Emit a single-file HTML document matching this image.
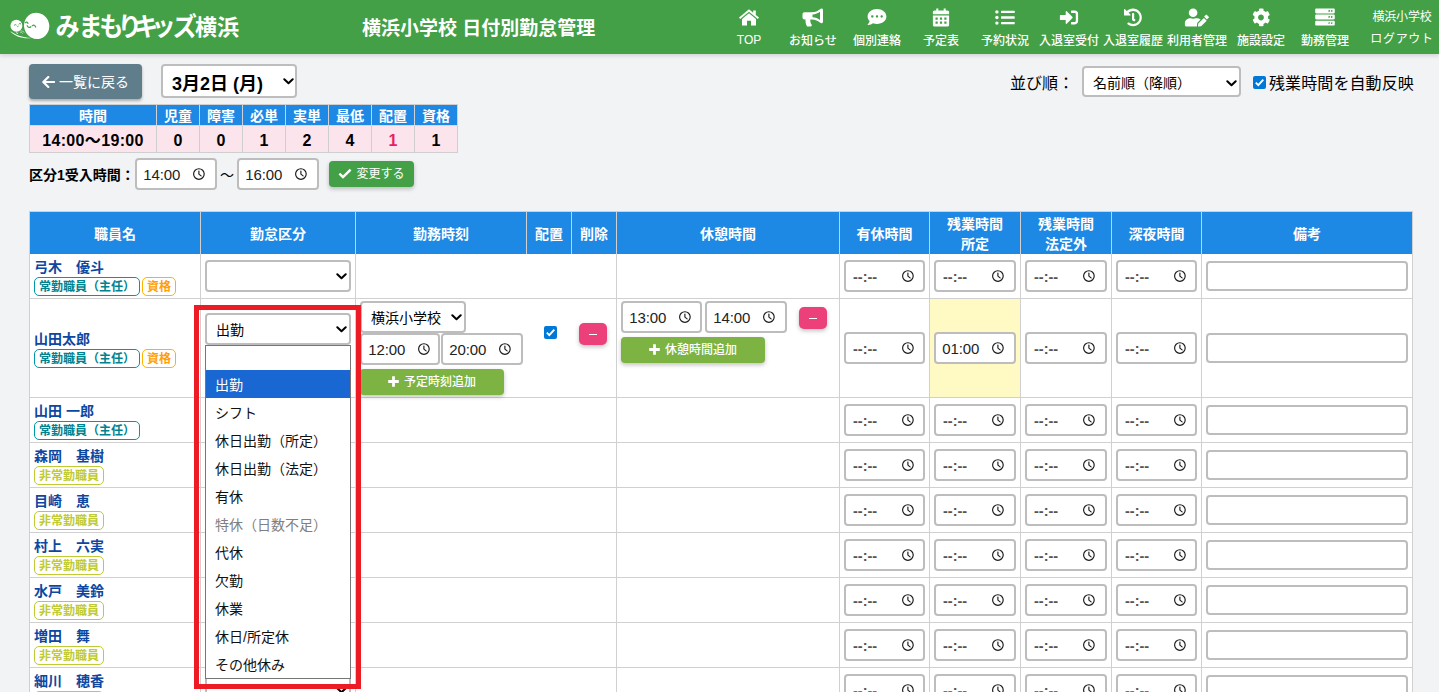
<!DOCTYPE html>
<html lang="ja">
<head>
<meta charset="utf-8">
<title>横浜小学校 日付別勤怠管理</title>
<style>
*{box-sizing:border-box;margin:0;padding:0}
html,body{width:1439px;height:692px;overflow:hidden}
body{background:#f2f3f5;font-family:"Liberation Sans","Noto Sans CJK JP",sans-serif;color:#000;position:relative;font-size:14px}
.abs{position:absolute}
/* ---------- header ---------- */
#hdr{position:absolute;left:0;top:0;width:1439px;height:54px;background:#43a047;box-shadow:0 2px 4px rgba(0,0,0,.13);z-index:5}
#logo-svg text{font-family:"Liberation Sans","Noto Sans CJK JP",sans-serif}
#logo-yh{position:absolute;left:195px;top:9px;color:#fff;font-weight:700;font-size:22px;line-height:38px;white-space:nowrap;letter-spacing:0}
#title{position:absolute;left:362px;top:14px;color:#fff;font-weight:700;font-size:19px;line-height:30px;white-space:nowrap}
.nav{position:absolute;top:0;width:64px;height:54px;color:#fff;text-align:center}
.nav svg{position:absolute;left:50%;top:8px;transform:translateX(-50%);fill:#fff}
.nav span{position:absolute;left:-10px;right:-10px;top:33px;font-size:12px;line-height:16px;letter-spacing:0;font-weight:500;white-space:nowrap}
#user{position:absolute;left:1357px;top:0;width:82px;color:#fff;font-size:12px;text-align:center;letter-spacing:-.2px}
#user div{position:absolute;left:0;right:-8px;line-height:16px;white-space:nowrap}
/* ---------- top controls ---------- */
#back{left:29px;top:64px;width:113px;height:35px;background:#607d8b;border-radius:4px;color:#fff;font-size:14px;line-height:36px;text-align:center;box-shadow:0 2px 3px rgba(0,0,0,.3);white-space:nowrap}
.sel{position:absolute;background:#fff;border:2px solid #bdbdbd;border-radius:4px;white-space:nowrap}
.sel svg{position:absolute}
#datesel{left:161px;top:64px;width:136px;height:34px;font-weight:700;font-size:18px;line-height:37px;padding-left:9px}
#sortlbl{left:1010px;top:70px;font-size:16px;line-height:28px;white-space:nowrap}
#sortsel{left:1082px;top:66px;width:159px;height:31px;font-size:14px;line-height:31px;padding-left:9px}
#chk1{left:1253px;top:76px}
.cb{position:absolute;width:13px;height:13px;background:#0078d7;border-radius:2px}
.cb svg{position:absolute;left:0;top:0}
#chklbl{left:1269px;top:70px;font-size:16px;line-height:28px;white-space:nowrap;letter-spacing:.1px}
/* ---------- summary table ---------- */
#sum{position:absolute;left:29px;top:104px;border-collapse:separate;border-spacing:0;table-layout:fixed;width:429px;border-top:1px solid #cfcfcf;border-left:1px solid #cfcfcf}
#sum th{background:#1e88e5;color:#fff;font-weight:700;font-size:14px;height:21px;line-height:18px;border-right:1px solid #cfd2d6;border-bottom:1px solid #e3d3da;text-align:center;padding:2px 0 0}
#sum td{background:#fce4ec;font-weight:700;font-size:16px;height:27px;line-height:22px;border-right:1px solid #cfcfcf;border-bottom:1px solid #cfcfcf;text-align:center;padding:4px 0 0;letter-spacing:.35px}
#sum td.red{color:#e91e63}
#kubun{left:29px;top:160px;font-weight:700;font-size:14px;line-height:30px;white-space:nowrap}
.time{position:absolute;background:#fff;border:2px solid #bdbdbd;border-radius:4px;font-size:15px;letter-spacing:-.15px;white-space:nowrap;color:#222}
.time span{position:absolute;left:6.3px;top:0}
.time svg{position:absolute}
#chg{left:329px;top:161px;width:85px;height:26px;background:#43a047;border-radius:4px;color:#fff;font-size:12px;line-height:27px;text-align:center;box-shadow:0 2px 4px rgba(0,0,0,.24);white-space:nowrap}
/* ---------- main table ---------- */
#grid{position:absolute;left:29px;top:211px;width:1384px;height:481px;background:#fff}
.th{position:absolute;top:1px;height:42px;background:#1e88e5;color:#fff;font-weight:700;font-size:14px;line-height:44px;text-align:center;white-space:nowrap;overflow:hidden}
.th.two{line-height:20px;padding-top:2px}
.vl{position:absolute;width:1px;background:#d0d0d0}
.hl{position:absolute;left:0;width:1384px;height:1px;background:#d0d0d0}
.yl{position:absolute;background:#fff9c4}
.nm{position:absolute;left:5px;color:#0d47a1;font-weight:700;font-size:14px;line-height:21px;padding-top:1px;white-space:nowrap}
.bd{position:absolute;height:19px;border:1px solid;border-radius:5px;font-weight:700;font-size:12px;line-height:19px;text-align:center;white-space:nowrap;background:#fff}
.b1{color:#00838f;border-color:#0097a7}
.b2{color:#ffa000;border-color:#ffb300}
.b3{color:#c0ca33;border-color:#c0ca33}
.txt{position:absolute;width:202px;height:30px;background:#fff;border:2px solid #bdbdbd;border-radius:4px}
.btn{position:absolute;border-radius:4px;color:#fff;text-align:center;white-space:nowrap;box-shadow:0 2px 4px rgba(0,0,0,.24)}
.pink{background:#ec407a;border-radius:5px}
.lg{background:#7cb342;font-size:12px;font-weight:500}
.s14{font-size:14px;line-height:30px;padding-left:9px}
.s14b{font-size:14px;line-height:30px;padding-left:9px}
.cv{position:absolute;line-height:0}
.time span{line-height:30px}
.time svg{left:55px;top:7px}
.time.em span{font-weight:700;line-height:31px;font-size:14.5px;letter-spacing:0;left:7px;color:#555}
.pink i{position:absolute;left:10px;top:11px;width:8px;height:1px;background:#fff}
/* dropdown */
#dd{left:205px;top:345px;width:146px;height:334px;background:#fff;border:1px solid #767676;z-index:3}
#dd div{height:28px;line-height:30px;overflow:hidden;font-size:14px;padding-left:9px;white-space:nowrap;color:#111}
#dd div.blank{height:24px}
#dd div.on{background:#1967d2;color:#fff}
#dd div.dis{color:#808080}
#red{left:194px;top:305px;width:167px;height:384px;border:5px solid #ed1c24;z-index:4}
</style>
</head>
<body>
<div id="hdr">
  <svg class="abs" style="left:4px;top:6px" width="60" height="40" viewBox="4 6 60 40">
    <circle cx="16.400" cy="25.800" r="5.950" fill="#fff"/>
    <ellipse cx="36.650" cy="25.900" rx="12.550" ry="13.200" transform="rotate(-18 36.650 25.900)" fill="#fff"/>
    <path d="M10.200 30.900C15 34.600 22 37.300 31.500 37.900C24 39.100 14 36.400 10.200 30.900z" fill="#fff"/>
    <path d="M20.600 30.600q2.200 .4 3.800 1.800M19.800 31.900q1.800 .5 3 1.600" stroke="#fff" stroke-width=".7" fill="none" opacity=".8"/>
    <path d="M16.200 32.300l.9 1.300 1-.9" stroke="#fff" stroke-width=".9" fill="none"/>
    <path d="M14.300 25.100q.9-1.100 1.800-.3M18.900 24q.9-1.100 1.800-.3M17 26.200q.5 1 1.300 .1" stroke="#43a047" stroke-width=".95" fill="none" stroke-linecap="round"/>
    <path d="M25.400 22.700q1.400-1.300 2.600 .6M32.400 25.700q2-1.500 3.300 1.300M27.200 25.700q1.500 2.800 3.600 1" stroke="#43a047" stroke-width="1.250" fill="none" stroke-linecap="round"/>
  </svg>
  <svg id="logo-svg" class="abs" style="left:0;top:0" width="250" height="54" viewBox="0 0 250 54"><text transform="scale(.93 1)" x="59.800 84.500 106.700 126.500 144 162.800 185.700" y="36.200" font-size="26" font-weight="700" fill="#fff">みまもりキッズ</text></svg><div id="logo-yh">横浜</div>
  <div id="title">横浜小学校 日付別勤怠管理</div>
  <div class="nav" style="left:717px"><svg width="22" height="18" viewBox="0 0 22 18"><path d="M11 1.2 1 9.6l1.2 1.4L11 3.7l8.800 7.3L21 9.600 17.800 6.900V2.500h-2.600v2.200z"/><path d="M11 5.300 4 11.100V17.500h5V12.800h4V17.500h5V11.100z"/></svg><span style="top:32px">TOP</span></div>
  <div class="nav" style="left:781px"><svg width="22" height="19" viewBox="0 0 22 19"><path d="M19.500.5c-.5 0-.9.200-1.200.500C16 3 13.500 4.300 9.500 4.300H2.500C1.400 4.300.5 5.200.5 6.300v3.200c0 1.100.9 2 2 2h1.100c-.1.400-.1.800-.1 1.200 0 1.900.5 3.700 1.300 5.200.2.400.700.600 1.100.600h2.700c1 0 1.600-1.100 1-1.900-.8-1.100-1.300-2.400-1.300-3.900 0-.4.100-.8.100-1.200h1.100c4 0 6.500 1.300 8.800 3.300.3.300.7.500 1.200.500.900 0 1.500-.7 1.500-1.500V2c0-.800-.6-1.500-1.500-1.500zM18 12c-2-1.500-4.300-2.500-7.500-2.700V6.500C13.700 6.300 16 5.300 18 3.800z" fill-rule="evenodd"/></svg><span>お知らせ</span></div>
  <div class="nav" style="left:845px"><svg width="20" height="18" viewBox="0 0 20 18" style="top:8px"><path d="M10 1C4.800 1 .6 4.300.6 8.400c0 1.800.8 3.400 2.100 4.700-.5 1.800-2 3.400-2 3.400-.1.100-.1.200-.1.300.1.100.2.200.3.200 2.400 0 4.200-1.100 5.100-1.800 1.200.4 2.600.7 4 .7 5.200 0 9.400-3.300 9.400-7.400S15.200 1 10 1zM5.300 9.700c-.7 0-1.200-.5-1.200-1.200s.5-1.200 1.200-1.200 1.200.5 1.200 1.200-.5 1.200-1.200 1.200zm4.700 0c-.7 0-1.200-.5-1.200-1.200s.5-1.200 1.200-1.200 1.200.5 1.200 1.200-.5 1.200-1.200 1.200zm4.700 0c-.7 0-1.200-.5-1.200-1.200s.5-1.200 1.200-1.200 1.200.5 1.200 1.200-.5 1.200-1.200 1.200z" fill-rule="evenodd"/></svg><span>個別連絡</span></div>
  <div class="nav" style="left:909px"><svg width="17" height="19" viewBox="0 0 17 19"><path d="M3.800.5h2v3h-2zM11.200.5h2v3h-2z"/><path d="M.3 4.300c0-1 .8-1.800 1.800-1.800h12.800c1 0 1.800.8 1.800 1.800V6.200H.3z"/><path d="M.3 7.400h16.400v9.300c0 1-.8 1.800-1.800 1.800H2.100c-1 0-1.800-.8-1.800-1.800zM3 9.600v2.200h2.200V9.600zm4.400 0v2.200h2.200V9.600zm4.400 0v2.200H14V9.600zM3 13.600v2.200h2.200v-2.200zm4.400 0v2.200h2.200v-2.200zm4.400 0v2.200H14v-2.200z" fill-rule="evenodd"/></svg><span>予定表</span></div>
  <div class="nav" style="left:973px"><svg width="20" height="15" viewBox="0 0 20 15" style="top:10px"><circle cx="1.900" cy="1.900" r="1.700"/><circle cx="1.900" cy="7.500" r="1.700"/><circle cx="1.900" cy="13.100" r="1.700"/><rect x="6" y=".8" width="13.700" height="2.300" rx=".5"/><rect x="6" y="6.350" width="13.700" height="2.300" rx=".5"/><rect x="6" y="11.900" width="13.700" height="2.300" rx=".5"/></svg><span>予約状況</span></div>
  <div class="nav" style="left:1037px"><svg width="19" height="15" viewBox="0 0 19 15" style="top:10px"><path d="M7.200 1.300 13 7.100c.2.200.2.600 0 .8L7.200 13.700c-.4.400-1 .1-1-.4V10H.9c-.3 0-.6-.3-.6-.6V5.600c0-.3.300-.6.600-.6h5.300V1.700c0-.5.600-.8 1-.4z"/><path d="M12 .6h3.400c1.800 0 3.300 1.500 3.300 3.300v7.200c0 1.800-1.500 3.300-3.300 3.300H12c-.3 0-.5-.2-.5-.5v-1.400c0-.3.200-.5.500-.5h3.400c.5 0 .9-.4.900-.9V3.900c0-.5-.4-.9-.9-.9H12c-.3 0-.5-.2-.5-.5V1.100c0-.3.200-.5.500-.5z"/></svg><span>入退室受付</span></div>
  <div class="nav" style="left:1101px"><svg width="19" height="19" viewBox="0 0 19 19" style="top:8px"><path d="M18.300 9.500c0 4.800-3.900 8.700-8.700 8.700-2.100 0-4-.7-5.500-1.900-.4-.3-.4-.9-.1-1.200l.4-.4c.3-.3.800-.3 1.100-.1 1.100.9 2.500 1.400 4.100 1.400 3.600 0 6.500-2.900 6.500-6.500S13.200 3 9.600 3C7.900 3 6.300 3.700 5.100 4.800l1.800 1.800c.4.400.1 1-.4 1H1.100c-.3 0-.6-.3-.6-.6V1.600c0-.5.600-.8 1-.4l1.800 1.800C4.900 1.500 7.100.6 9.500.6c4.900.1 8.800 4 8.800 8.900z"/><path d="M11.700 12.500l-.4.500c-.3.400-.8.400-1.200.2L8.500 11.900V5.900c0-.5.400-.8.800-.8h.6c.5 0 .8.400.8.800v4.900l1.100.8c.3.300.2.700-.1.900z"/></svg><span>入退室履歴</span></div>
  <div class="nav" style="left:1165px"><svg width="25" height="19" viewBox="0 0 25 19"><circle cx="8.600" cy="4.800" r="4.300"/><path d="M11.600 10.200h-.6c-.7.300-1.500.5-2.400.5s-1.700-.2-2.400-.5h-.6C2.700 10.200.3 12.600.3 15.500v1.200c0 1 .8 1.800 1.800 1.800h10.400c-.1-.3-.1-.5-.1-.8l.3-2.400.1-.4.300-.3 3-3c-1-1-2.600-1.400-4.500-1.400z"/><path d="M13.800 15.500l-.3 2.500c0 .3.200.6.600.6l2.500-.3 5.600-5.600-2.800-2.800zM24.200 8.700l-1.500-1.500c-.5-.5-1.200-.5-1.700 0l-1.400 1.400 2.800 2.800 1.400-1.400c.5-.1.900-.8.400-1.300z"/></svg><span>利用者管理</span></div>
  <div class="nav" style="left:1229px"><svg width="19" height="19" viewBox="0 0 19 19"><path d="M18 11.500l-1.500-.9c.2-.8.200-1.700 0-2.500l1.500-.9c.2-.1.300-.3.200-.5-.4-1.300-1.100-2.400-1.900-3.400-.1-.2-.4-.2-.6-.1l-1.500.9c-.6-.5-1.400-1-2.200-1.300V1.100c0-.2-.1-.4-.3-.4-1.300-.3-2.700-.3-3.900 0-.2 0-.3.200-.3.400v1.700c-.8.300-1.500.7-2.200 1.300l-1.500-.9c-.2-.1-.4-.1-.6.100-.9 1-1.500 2.100-1.900 3.400-.1.200 0 .4.200.5l1.500.9c-.2.800-.2 1.700 0 2.500l-1.500.9c-.2.100-.3.300-.2.500.4 1.300 1.100 2.400 1.900 3.400.1.200.4.200.6.100l1.500-.9c.6.500 1.400 1 2.200 1.300v1.700c0 .2.100.4.300.4 1.300.3 2.700.3 3.900 0 .2 0 .3-.2.300-.4v-1.700c.8-.3 1.500-.7 2.200-1.300l1.500.9c.2.100.4.100.6-.1.900-1 1.500-2.100 1.900-3.400.1-.2 0-.4-.2-.5zM9.500 12.400c-1.600 0-2.900-1.300-2.900-2.900s1.300-2.900 2.900-2.900 2.900 1.300 2.900 2.900-1.300 2.900-2.900 2.900z" fill-rule="evenodd"/></svg><span>施設設定</span></div>
  <div class="nav" style="left:1293px"><svg width="20" height="18" viewBox="0 0 20 18" style="top:8px"><path d="M18.600 5.400H1.400C.7 5.400.2 4.900.2 4.200V1.700C.2 1 .7.500 1.400.500h17.200c.7 0 1.200.5 1.200 1.200v2.500c0 .7-.5 1.200-1.200 1.200zM16.700 2c-.5 0-.9.400-.9.900s.4.900.9.900.9-.4.900-.9-.4-.9-.9-.9zm-2.500 0c-.5 0-.9.400-.9.900s.4.900.9.900.9-.4.900-.9-.4-.9-.9-.9zM18.600 11.500H1.400c-.7 0-1.200-.5-1.200-1.200V7.800c0-.7.500-1.200 1.200-1.200h17.200c.7 0 1.200.5 1.200 1.200v2.500c0 .7-.5 1.200-1.200 1.200zM16.700 8.100c-.5 0-.9.400-.9.900s.4.900.9.900.9-.4.900-.9-.4-.9-.9-.9zm-2.500 0c-.5 0-.9.400-.9.900s.4.900.9.900.9-.4.900-.9-.4-.9-.9-.9zM18.600 17.600H1.400c-.7 0-1.200-.5-1.200-1.200v-2.500c0-.7.500-1.200 1.200-1.200h17.200c.7 0 1.200.5 1.200 1.200v2.500c0 .7-.5 1.200-1.200 1.200zM16.700 14.200c-.5 0-.9.400-.9.900s.4.900.9.900.9-.4.900-.9-.4-.9-.9-.9zm-2.500 0c-.5 0-.9.400-.9.900s.4.900.9.900.9-.4.900-.9-.4-.9-.9-.9z" fill-rule="evenodd"/></svg><span>勤務管理</span></div>
  <div id="user"><div style="top:9px">横浜小学校</div><div style="top:31px;letter-spacing:.7px">ログアウト</div></div>
</div>
<div id="back" class="abs"><svg width="13" height="12" viewBox="0 0 13 12" style="vertical-align:-1px;margin-right:4px"><path d="M6.3 1 1.3 6l5 5M1.600 6h10.600" fill="none" stroke="#fff" stroke-width="2.200" stroke-linecap="round" stroke-linejoin="round"/></svg>一覧に戻る</div>
<div id="datesel" class="sel">3月2日 (月)<span class="cv" style="left:120px;top:12px"><svg width="11" height="7" viewBox="0 0 11 7"><path d="M1.3 1.3 5.5 5.3 9.7 1.3" fill="none" stroke="#000" stroke-width="2" stroke-linecap="round" stroke-linejoin="round"/></svg></span></div>
<div id="sortlbl" class="abs">並び順：</div>
<div id="sortsel" class="sel">名前順（降順）<span class="cv" style="left:142px;top:11.500px"><svg width="11" height="7" viewBox="0 0 11 7"><path d="M1.3 1.3 5.5 5.3 9.7 1.3" fill="none" stroke="#000" stroke-width="2" stroke-linecap="round" stroke-linejoin="round"/></svg></span></div>
<div id="chk1" class="cb"><svg width="13" height="13" viewBox="0 0 13 13"><path d="M2.8 6.7 5.3 9.2 10.3 3.7" fill="none" stroke="#fff" stroke-width="1.9"/></svg></div>
<div id="chklbl" class="abs">残業時間を自動反映</div>
<table id="sum"><colgroup><col style="width:127px"><col style="width:43px"><col style="width:43px"><col style="width:43px"><col style="width:43px"><col style="width:43px"><col style="width:43px"><col style="width:43px"></colgroup>
<tr><th>時間</th><th>児童</th><th>障害</th><th>必単</th><th>実単</th><th>最低</th><th>配置</th><th>資格</th></tr>
<tr><td>14:00〜19:00</td><td>0</td><td>0</td><td>1</td><td>2</td><td>4</td><td class="red">1</td><td>1</td></tr></table>
<div id="kubun" class="abs">区分1受入時間：</div>
<div class="time" style="left:135px;top:158px;width:82px;height:32px"><span>14:00</span><svg width="14" height="14" viewBox="0 0 14 14"><circle cx="6.9" cy="7" r="5.3" fill="none" stroke="#1a1a1a" stroke-width="1.15"/><path d="M6.9 4V7.100L9.100 8.900" fill="none" stroke="#1a1a1a" stroke-width="1.15" stroke-linecap="round" stroke-linejoin="round"/></svg></div>
<div class="abs" style="left:220px;top:160px;font-size:14px;line-height:30px">〜</div>
<div class="time" style="left:237px;top:158px;width:82px;height:32px"><span>16:00</span><svg width="14" height="14" viewBox="0 0 14 14"><circle cx="6.9" cy="7" r="5.3" fill="none" stroke="#1a1a1a" stroke-width="1.15"/><path d="M6.9 4V7.100L9.100 8.900" fill="none" stroke="#1a1a1a" stroke-width="1.15" stroke-linecap="round" stroke-linejoin="round"/></svg></div>
<div id="chg" class="btn"><svg width="14" height="11" viewBox="0 0 14 11" style="margin-right:4px;vertical-align:-1px"><path d="M1.4 5.6 5 9.1 12.6 1.6" fill="none" stroke="#fff" stroke-width="2.500"/></svg>変更する</div>
<div id="grid">
<div class="th" style="left:1px;width:170px">職員名</div>
<div class="th" style="left:172px;width:154px">勤怠区分</div>
<div class="th" style="left:327px;width:170px">勤務時刻</div>
<div class="th" style="left:498px;width:44px">配置</div>
<div class="th" style="left:543px;width:44px">削除</div>
<div class="th" style="left:588px;width:222px">休憩時間</div>
<div class="th" style="left:811px;width:89px">有休時間</div>
<div class="th two" style="left:901px;width:90px">残業時間<br>所定</div>
<div class="th two" style="left:992px;width:90px">残業時間<br>法定外</div>
<div class="th" style="left:1083px;width:89px">深夜時間</div>
<div class="th" style="left:1173px;width:210px">備考</div>
<div class="vl" style="left:0px;top:0;height:481px"></div>
<div class="vl" style="left:171px;top:0;height:481px"></div>
<div class="vl" style="left:326px;top:0;height:481px"></div>
<div class="vl" style="left:497px;top:0;height:43px"></div>
<div class="vl" style="left:542px;top:0;height:43px"></div>
<div class="vl" style="left:587px;top:0;height:481px"></div>
<div class="vl" style="left:810px;top:0;height:481px"></div>
<div class="vl" style="left:900px;top:0;height:481px"></div>
<div class="vl" style="left:991px;top:0;height:481px"></div>
<div class="vl" style="left:1082px;top:0;height:481px"></div>
<div class="vl" style="left:1172px;top:0;height:481px"></div>
<div class="vl" style="left:1383px;top:0;height:481px"></div>
<div class="hl" style="top:0px"></div>
<div class="hl" style="top:87px"></div>
<div class="hl" style="top:186px"></div>
<div class="hl" style="top:231px"></div>
<div class="hl" style="top:276px"></div>
<div class="hl" style="top:321px"></div>
<div class="hl" style="top:366px"></div>
<div class="hl" style="top:411px"></div>
<div class="hl" style="top:456px"></div>
<div class="yl" style="left:901px;top:88px;width:90px;height:98px"></div>
<div class="nm" style="top:45px">弓木　優斗</div>
<div class="bd b1" style="left:5px;top:66px;width:106px">常勤職員（主任）</div>
<div class="bd b2" style="left:113px;top:66px;width:34px">資格</div>
<div class="time em" style="left:815px;top:49px;width:81px;height:32px"><span>--:--</span><svg width="14" height="14" viewBox="0 0 14 14"><circle cx="6.9" cy="7" r="5.3" fill="none" stroke="#1a1a1a" stroke-width="1.15"/><path d="M6.9 4V7.100L9.100 8.900" fill="none" stroke="#1a1a1a" stroke-width="1.15" stroke-linecap="round" stroke-linejoin="round"/></svg></div>
<div class="time em" style="left:905px;top:49px;width:82px;height:32px"><span>--:--</span><svg width="14" height="14" viewBox="0 0 14 14"><circle cx="6.9" cy="7" r="5.3" fill="none" stroke="#1a1a1a" stroke-width="1.15"/><path d="M6.9 4V7.100L9.100 8.900" fill="none" stroke="#1a1a1a" stroke-width="1.15" stroke-linecap="round" stroke-linejoin="round"/></svg></div>
<div class="time em" style="left:996px;top:49px;width:82px;height:32px"><span>--:--</span><svg width="14" height="14" viewBox="0 0 14 14"><circle cx="6.9" cy="7" r="5.3" fill="none" stroke="#1a1a1a" stroke-width="1.15"/><path d="M6.9 4V7.100L9.100 8.900" fill="none" stroke="#1a1a1a" stroke-width="1.15" stroke-linecap="round" stroke-linejoin="round"/></svg></div>
<div class="time em" style="left:1087px;top:49px;width:81px;height:32px"><span>--:--</span><svg width="14" height="14" viewBox="0 0 14 14"><circle cx="6.9" cy="7" r="5.3" fill="none" stroke="#1a1a1a" stroke-width="1.15"/><path d="M6.9 4V7.100L9.100 8.900" fill="none" stroke="#1a1a1a" stroke-width="1.15" stroke-linecap="round" stroke-linejoin="round"/></svg></div>
<div class="txt" style="left:1177px;top:50px"></div>
<div class="nm" style="top:117px">山田太郎</div>
<div class="bd b1" style="left:5px;top:138px;width:106px">常勤職員（主任）</div>
<div class="bd b2" style="left:113px;top:138px;width:34px">資格</div>
<div class="time em" style="left:815px;top:121px;width:81px;height:32px"><span>--:--</span><svg width="14" height="14" viewBox="0 0 14 14"><circle cx="6.9" cy="7" r="5.3" fill="none" stroke="#1a1a1a" stroke-width="1.15"/><path d="M6.9 4V7.100L9.100 8.900" fill="none" stroke="#1a1a1a" stroke-width="1.15" stroke-linecap="round" stroke-linejoin="round"/></svg></div>
<div class="time" style="left:905px;top:121px;width:82px;height:32px"><span>01:00</span><svg width="14" height="14" viewBox="0 0 14 14"><circle cx="6.9" cy="7" r="5.3" fill="none" stroke="#1a1a1a" stroke-width="1.15"/><path d="M6.9 4V7.100L9.100 8.900" fill="none" stroke="#1a1a1a" stroke-width="1.15" stroke-linecap="round" stroke-linejoin="round"/></svg></div>
<div class="time em" style="left:996px;top:121px;width:82px;height:32px"><span>--:--</span><svg width="14" height="14" viewBox="0 0 14 14"><circle cx="6.9" cy="7" r="5.3" fill="none" stroke="#1a1a1a" stroke-width="1.15"/><path d="M6.9 4V7.100L9.100 8.900" fill="none" stroke="#1a1a1a" stroke-width="1.15" stroke-linecap="round" stroke-linejoin="round"/></svg></div>
<div class="time em" style="left:1087px;top:121px;width:81px;height:32px"><span>--:--</span><svg width="14" height="14" viewBox="0 0 14 14"><circle cx="6.9" cy="7" r="5.3" fill="none" stroke="#1a1a1a" stroke-width="1.15"/><path d="M6.9 4V7.100L9.100 8.900" fill="none" stroke="#1a1a1a" stroke-width="1.15" stroke-linecap="round" stroke-linejoin="round"/></svg></div>
<div class="txt" style="left:1177px;top:122px"></div>
<div class="nm" style="top:189px">山田 一郎</div>
<div class="bd b1" style="left:5px;top:210px;width:106px">常勤職員（主任）</div>
<div class="time em" style="left:815px;top:193px;width:81px;height:32px"><span>--:--</span><svg width="14" height="14" viewBox="0 0 14 14"><circle cx="6.9" cy="7" r="5.3" fill="none" stroke="#1a1a1a" stroke-width="1.15"/><path d="M6.9 4V7.100L9.100 8.900" fill="none" stroke="#1a1a1a" stroke-width="1.15" stroke-linecap="round" stroke-linejoin="round"/></svg></div>
<div class="time em" style="left:905px;top:193px;width:82px;height:32px"><span>--:--</span><svg width="14" height="14" viewBox="0 0 14 14"><circle cx="6.9" cy="7" r="5.3" fill="none" stroke="#1a1a1a" stroke-width="1.15"/><path d="M6.9 4V7.100L9.100 8.900" fill="none" stroke="#1a1a1a" stroke-width="1.15" stroke-linecap="round" stroke-linejoin="round"/></svg></div>
<div class="time em" style="left:996px;top:193px;width:82px;height:32px"><span>--:--</span><svg width="14" height="14" viewBox="0 0 14 14"><circle cx="6.9" cy="7" r="5.3" fill="none" stroke="#1a1a1a" stroke-width="1.15"/><path d="M6.9 4V7.100L9.100 8.900" fill="none" stroke="#1a1a1a" stroke-width="1.15" stroke-linecap="round" stroke-linejoin="round"/></svg></div>
<div class="time em" style="left:1087px;top:193px;width:81px;height:32px"><span>--:--</span><svg width="14" height="14" viewBox="0 0 14 14"><circle cx="6.9" cy="7" r="5.3" fill="none" stroke="#1a1a1a" stroke-width="1.15"/><path d="M6.9 4V7.100L9.100 8.900" fill="none" stroke="#1a1a1a" stroke-width="1.15" stroke-linecap="round" stroke-linejoin="round"/></svg></div>
<div class="txt" style="left:1177px;top:194px"></div>
<div class="nm" style="top:234px">森岡　基樹</div>
<div class="bd b3" style="left:5px;top:255px;width:70px">非常勤職員</div>
<div class="time em" style="left:815px;top:238px;width:81px;height:32px"><span>--:--</span><svg width="14" height="14" viewBox="0 0 14 14"><circle cx="6.9" cy="7" r="5.3" fill="none" stroke="#1a1a1a" stroke-width="1.15"/><path d="M6.9 4V7.100L9.100 8.900" fill="none" stroke="#1a1a1a" stroke-width="1.15" stroke-linecap="round" stroke-linejoin="round"/></svg></div>
<div class="time em" style="left:905px;top:238px;width:82px;height:32px"><span>--:--</span><svg width="14" height="14" viewBox="0 0 14 14"><circle cx="6.9" cy="7" r="5.3" fill="none" stroke="#1a1a1a" stroke-width="1.15"/><path d="M6.9 4V7.100L9.100 8.900" fill="none" stroke="#1a1a1a" stroke-width="1.15" stroke-linecap="round" stroke-linejoin="round"/></svg></div>
<div class="time em" style="left:996px;top:238px;width:82px;height:32px"><span>--:--</span><svg width="14" height="14" viewBox="0 0 14 14"><circle cx="6.9" cy="7" r="5.3" fill="none" stroke="#1a1a1a" stroke-width="1.15"/><path d="M6.9 4V7.100L9.100 8.900" fill="none" stroke="#1a1a1a" stroke-width="1.15" stroke-linecap="round" stroke-linejoin="round"/></svg></div>
<div class="time em" style="left:1087px;top:238px;width:81px;height:32px"><span>--:--</span><svg width="14" height="14" viewBox="0 0 14 14"><circle cx="6.9" cy="7" r="5.3" fill="none" stroke="#1a1a1a" stroke-width="1.15"/><path d="M6.9 4V7.100L9.100 8.900" fill="none" stroke="#1a1a1a" stroke-width="1.15" stroke-linecap="round" stroke-linejoin="round"/></svg></div>
<div class="txt" style="left:1177px;top:239px"></div>
<div class="nm" style="top:279px">目崎　恵</div>
<div class="bd b3" style="left:5px;top:300px;width:70px">非常勤職員</div>
<div class="time em" style="left:815px;top:283px;width:81px;height:32px"><span>--:--</span><svg width="14" height="14" viewBox="0 0 14 14"><circle cx="6.9" cy="7" r="5.3" fill="none" stroke="#1a1a1a" stroke-width="1.15"/><path d="M6.9 4V7.100L9.100 8.900" fill="none" stroke="#1a1a1a" stroke-width="1.15" stroke-linecap="round" stroke-linejoin="round"/></svg></div>
<div class="time em" style="left:905px;top:283px;width:82px;height:32px"><span>--:--</span><svg width="14" height="14" viewBox="0 0 14 14"><circle cx="6.9" cy="7" r="5.3" fill="none" stroke="#1a1a1a" stroke-width="1.15"/><path d="M6.9 4V7.100L9.100 8.900" fill="none" stroke="#1a1a1a" stroke-width="1.15" stroke-linecap="round" stroke-linejoin="round"/></svg></div>
<div class="time em" style="left:996px;top:283px;width:82px;height:32px"><span>--:--</span><svg width="14" height="14" viewBox="0 0 14 14"><circle cx="6.9" cy="7" r="5.3" fill="none" stroke="#1a1a1a" stroke-width="1.15"/><path d="M6.9 4V7.100L9.100 8.900" fill="none" stroke="#1a1a1a" stroke-width="1.15" stroke-linecap="round" stroke-linejoin="round"/></svg></div>
<div class="time em" style="left:1087px;top:283px;width:81px;height:32px"><span>--:--</span><svg width="14" height="14" viewBox="0 0 14 14"><circle cx="6.9" cy="7" r="5.3" fill="none" stroke="#1a1a1a" stroke-width="1.15"/><path d="M6.9 4V7.100L9.100 8.900" fill="none" stroke="#1a1a1a" stroke-width="1.15" stroke-linecap="round" stroke-linejoin="round"/></svg></div>
<div class="txt" style="left:1177px;top:284px"></div>
<div class="nm" style="top:324px">村上　六実</div>
<div class="bd b3" style="left:5px;top:345px;width:70px">非常勤職員</div>
<div class="time em" style="left:815px;top:328px;width:81px;height:32px"><span>--:--</span><svg width="14" height="14" viewBox="0 0 14 14"><circle cx="6.9" cy="7" r="5.3" fill="none" stroke="#1a1a1a" stroke-width="1.15"/><path d="M6.9 4V7.100L9.100 8.900" fill="none" stroke="#1a1a1a" stroke-width="1.15" stroke-linecap="round" stroke-linejoin="round"/></svg></div>
<div class="time em" style="left:905px;top:328px;width:82px;height:32px"><span>--:--</span><svg width="14" height="14" viewBox="0 0 14 14"><circle cx="6.9" cy="7" r="5.3" fill="none" stroke="#1a1a1a" stroke-width="1.15"/><path d="M6.9 4V7.100L9.100 8.900" fill="none" stroke="#1a1a1a" stroke-width="1.15" stroke-linecap="round" stroke-linejoin="round"/></svg></div>
<div class="time em" style="left:996px;top:328px;width:82px;height:32px"><span>--:--</span><svg width="14" height="14" viewBox="0 0 14 14"><circle cx="6.9" cy="7" r="5.3" fill="none" stroke="#1a1a1a" stroke-width="1.15"/><path d="M6.9 4V7.100L9.100 8.900" fill="none" stroke="#1a1a1a" stroke-width="1.15" stroke-linecap="round" stroke-linejoin="round"/></svg></div>
<div class="time em" style="left:1087px;top:328px;width:81px;height:32px"><span>--:--</span><svg width="14" height="14" viewBox="0 0 14 14"><circle cx="6.9" cy="7" r="5.3" fill="none" stroke="#1a1a1a" stroke-width="1.15"/><path d="M6.9 4V7.100L9.100 8.900" fill="none" stroke="#1a1a1a" stroke-width="1.15" stroke-linecap="round" stroke-linejoin="round"/></svg></div>
<div class="txt" style="left:1177px;top:329px"></div>
<div class="nm" style="top:369px">水戸　美鈴</div>
<div class="bd b3" style="left:5px;top:390px;width:70px">非常勤職員</div>
<div class="time em" style="left:815px;top:373px;width:81px;height:32px"><span>--:--</span><svg width="14" height="14" viewBox="0 0 14 14"><circle cx="6.9" cy="7" r="5.3" fill="none" stroke="#1a1a1a" stroke-width="1.15"/><path d="M6.9 4V7.100L9.100 8.900" fill="none" stroke="#1a1a1a" stroke-width="1.15" stroke-linecap="round" stroke-linejoin="round"/></svg></div>
<div class="time em" style="left:905px;top:373px;width:82px;height:32px"><span>--:--</span><svg width="14" height="14" viewBox="0 0 14 14"><circle cx="6.9" cy="7" r="5.3" fill="none" stroke="#1a1a1a" stroke-width="1.15"/><path d="M6.9 4V7.100L9.100 8.900" fill="none" stroke="#1a1a1a" stroke-width="1.15" stroke-linecap="round" stroke-linejoin="round"/></svg></div>
<div class="time em" style="left:996px;top:373px;width:82px;height:32px"><span>--:--</span><svg width="14" height="14" viewBox="0 0 14 14"><circle cx="6.9" cy="7" r="5.3" fill="none" stroke="#1a1a1a" stroke-width="1.15"/><path d="M6.9 4V7.100L9.100 8.900" fill="none" stroke="#1a1a1a" stroke-width="1.15" stroke-linecap="round" stroke-linejoin="round"/></svg></div>
<div class="time em" style="left:1087px;top:373px;width:81px;height:32px"><span>--:--</span><svg width="14" height="14" viewBox="0 0 14 14"><circle cx="6.9" cy="7" r="5.3" fill="none" stroke="#1a1a1a" stroke-width="1.15"/><path d="M6.9 4V7.100L9.100 8.900" fill="none" stroke="#1a1a1a" stroke-width="1.15" stroke-linecap="round" stroke-linejoin="round"/></svg></div>
<div class="txt" style="left:1177px;top:374px"></div>
<div class="nm" style="top:414px">増田　舞</div>
<div class="bd b3" style="left:5px;top:435px;width:70px">非常勤職員</div>
<div class="time em" style="left:815px;top:418px;width:81px;height:32px"><span>--:--</span><svg width="14" height="14" viewBox="0 0 14 14"><circle cx="6.9" cy="7" r="5.3" fill="none" stroke="#1a1a1a" stroke-width="1.15"/><path d="M6.9 4V7.100L9.100 8.900" fill="none" stroke="#1a1a1a" stroke-width="1.15" stroke-linecap="round" stroke-linejoin="round"/></svg></div>
<div class="time em" style="left:905px;top:418px;width:82px;height:32px"><span>--:--</span><svg width="14" height="14" viewBox="0 0 14 14"><circle cx="6.9" cy="7" r="5.3" fill="none" stroke="#1a1a1a" stroke-width="1.15"/><path d="M6.9 4V7.100L9.100 8.900" fill="none" stroke="#1a1a1a" stroke-width="1.15" stroke-linecap="round" stroke-linejoin="round"/></svg></div>
<div class="time em" style="left:996px;top:418px;width:82px;height:32px"><span>--:--</span><svg width="14" height="14" viewBox="0 0 14 14"><circle cx="6.9" cy="7" r="5.3" fill="none" stroke="#1a1a1a" stroke-width="1.15"/><path d="M6.9 4V7.100L9.100 8.900" fill="none" stroke="#1a1a1a" stroke-width="1.15" stroke-linecap="round" stroke-linejoin="round"/></svg></div>
<div class="time em" style="left:1087px;top:418px;width:81px;height:32px"><span>--:--</span><svg width="14" height="14" viewBox="0 0 14 14"><circle cx="6.9" cy="7" r="5.3" fill="none" stroke="#1a1a1a" stroke-width="1.15"/><path d="M6.9 4V7.100L9.100 8.900" fill="none" stroke="#1a1a1a" stroke-width="1.15" stroke-linecap="round" stroke-linejoin="round"/></svg></div>
<div class="txt" style="left:1177px;top:419px"></div>
<div class="nm" style="top:459px">細川　穂香</div>
<div class="bd b3" style="left:5px;top:480px;width:70px">非常勤職員</div>
<div class="time em" style="left:815px;top:463px;width:81px;height:32px"><span>--:--</span><svg width="14" height="14" viewBox="0 0 14 14"><circle cx="6.9" cy="7" r="5.3" fill="none" stroke="#1a1a1a" stroke-width="1.15"/><path d="M6.9 4V7.100L9.100 8.900" fill="none" stroke="#1a1a1a" stroke-width="1.15" stroke-linecap="round" stroke-linejoin="round"/></svg></div>
<div class="time em" style="left:905px;top:463px;width:82px;height:32px"><span>--:--</span><svg width="14" height="14" viewBox="0 0 14 14"><circle cx="6.9" cy="7" r="5.3" fill="none" stroke="#1a1a1a" stroke-width="1.15"/><path d="M6.9 4V7.100L9.100 8.900" fill="none" stroke="#1a1a1a" stroke-width="1.15" stroke-linecap="round" stroke-linejoin="round"/></svg></div>
<div class="time em" style="left:996px;top:463px;width:82px;height:32px"><span>--:--</span><svg width="14" height="14" viewBox="0 0 14 14"><circle cx="6.9" cy="7" r="5.3" fill="none" stroke="#1a1a1a" stroke-width="1.15"/><path d="M6.9 4V7.100L9.100 8.900" fill="none" stroke="#1a1a1a" stroke-width="1.15" stroke-linecap="round" stroke-linejoin="round"/></svg></div>
<div class="time em" style="left:1087px;top:463px;width:81px;height:32px"><span>--:--</span><svg width="14" height="14" viewBox="0 0 14 14"><circle cx="6.9" cy="7" r="5.3" fill="none" stroke="#1a1a1a" stroke-width="1.15"/><path d="M6.9 4V7.100L9.100 8.900" fill="none" stroke="#1a1a1a" stroke-width="1.15" stroke-linecap="round" stroke-linejoin="round"/></svg></div>
<div class="txt" style="left:1177px;top:464px"></div>
<div class="sel s14" style="left:176px;top:49px;width:146px;height:32px"><span class="cv" style="left:129px;top:11px"><svg width="11" height="7" viewBox="0 0 11 7"><path d="M1.3 1.3 5.5 5.3 9.7 1.3" fill="none" stroke="#000" stroke-width="2" stroke-linecap="round" stroke-linejoin="round"/></svg></span></div>
<div class="sel s14" style="left:176px;top:102px;width:146px;height:32px">出勤<span class="cv" style="left:129px;top:11px"><svg width="11" height="7" viewBox="0 0 11 7"><path d="M1.3 1.3 5.5 5.3 9.7 1.3" fill="none" stroke="#000" stroke-width="2" stroke-linecap="round" stroke-linejoin="round"/></svg></span></div>
<div class="sel s14" style="left:176px;top:463px;width:146px;height:32px"><span class="cv" style="left:129px;top:11px"><svg width="11" height="7" viewBox="0 0 11 7"><path d="M1.3 1.3 5.5 5.3 9.7 1.3" fill="none" stroke="#000" stroke-width="2" stroke-linecap="round" stroke-linejoin="round"/></svg></span></div>
<div class="sel s14b" style="left:331px;top:90px;width:106px;height:32px">横浜小学校<span class="cv" style="left:89px;top:11px"><svg width="11" height="7" viewBox="0 0 11 7"><path d="M1.3 1.3 5.5 5.3 9.7 1.3" fill="none" stroke="#000" stroke-width="2" stroke-linecap="round" stroke-linejoin="round"/></svg></span></div>
<div class="time" style="left:331px;top:122px;width:80px;height:32px"><span>12:00</span><svg width="14" height="14" viewBox="0 0 14 14"><circle cx="6.9" cy="7" r="5.3" fill="none" stroke="#1a1a1a" stroke-width="1.15"/><path d="M6.9 4V7.100L9.100 8.900" fill="none" stroke="#1a1a1a" stroke-width="1.15" stroke-linecap="round" stroke-linejoin="round"/></svg></div>
<div class="time" style="left:412px;top:122px;width:82px;height:32px"><span>20:00</span><svg width="14" height="14" viewBox="0 0 14 14"><circle cx="6.9" cy="7" r="5.3" fill="none" stroke="#1a1a1a" stroke-width="1.15"/><path d="M6.9 4V7.100L9.100 8.900" fill="none" stroke="#1a1a1a" stroke-width="1.15" stroke-linecap="round" stroke-linejoin="round"/></svg></div>
<div class="btn lg" style="left:331px;top:158px;width:144px;height:26px;line-height:27px"><svg width="11" height="11" viewBox="0 0 11 11" style="margin-right:5px;vertical-align:-1px"><path d="M5.5 .2v10.600M.2 5.500h10.600" stroke="#fff" stroke-width="2.800" fill="none"/></svg>予定時刻追加</div>
<div class="cb" style="left:515px;top:115px"><svg width="13" height="13" viewBox="0 0 13 13"><path d="M2.8 6.7 5.3 9.2 10.3 3.7" fill="none" stroke="#fff" stroke-width="1.9"/></svg></div>
<div class="btn pink" style="left:550px;top:112px;width:28px;height:22px"><i></i></div>
<div class="time" style="left:592px;top:90px;width:81px;height:32px"><span>13:00</span><svg width="14" height="14" viewBox="0 0 14 14"><circle cx="6.9" cy="7" r="5.3" fill="none" stroke="#1a1a1a" stroke-width="1.15"/><path d="M6.9 4V7.100L9.100 8.900" fill="none" stroke="#1a1a1a" stroke-width="1.15" stroke-linecap="round" stroke-linejoin="round"/></svg></div>
<div class="time" style="left:676px;top:90px;width:82px;height:32px"><span>14:00</span><svg width="14" height="14" viewBox="0 0 14 14"><circle cx="6.9" cy="7" r="5.3" fill="none" stroke="#1a1a1a" stroke-width="1.15"/><path d="M6.9 4V7.100L9.100 8.900" fill="none" stroke="#1a1a1a" stroke-width="1.15" stroke-linecap="round" stroke-linejoin="round"/></svg></div>
<div class="btn pink" style="left:770px;top:96px;width:28px;height:22px"><i></i></div>
<div class="btn lg" style="left:592px;top:126px;width:144px;height:26px;line-height:27px"><svg width="11" height="11" viewBox="0 0 11 11" style="margin-right:5px;vertical-align:-1px"><path d="M5.5 .2v10.600M.2 5.500h10.600" stroke="#fff" stroke-width="2.800" fill="none"/></svg>休憩時間追加</div>
</div>
<div id="dd" class="abs"><div class="blank"></div><div class="on">出勤</div><div>シフト</div><div>休日出勤（所定）</div><div>休日出勤（法定）</div><div>有休</div><div class="dis">特休（日数不足）</div><div>代休</div><div>欠勤</div><div>休業</div><div>休日/所定休</div><div>その他休み</div></div>
<div id="red" class="abs"></div>
</body>
</html>
